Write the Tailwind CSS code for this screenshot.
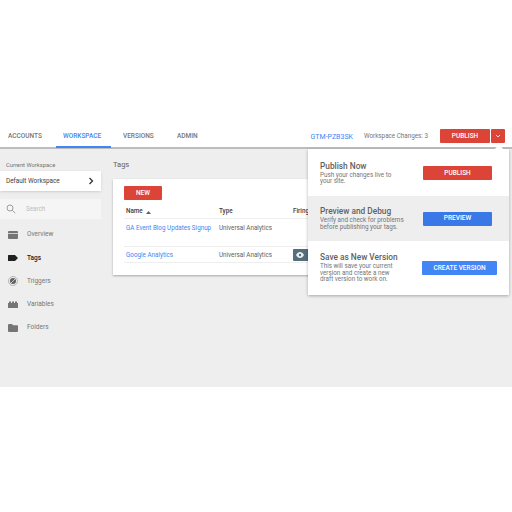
<!DOCTYPE html>
<html lang="en">
<head>
  <meta charset="UTF-8" />
  <title>Tag Manager</title>
  <script src="https://cdn.jsdelivr.net/npm/@tailwindcss/browser@4"></script>
</head>
<body class="bg-white h-[512px] overflow-hidden font-['Roboto',sans-serif] text-[#616161]">
  <div class="pt-[125px] relative">
    <!-- top bar -->
    <header class="h-[24px] bg-white border-b-2 border-[#bdbdbd] flex items-center pl-2 pr-[7px] text-[6.5px] font-medium">
      <div class="w-[48px] pt-[2px] text-[#757575]">ACCOUNTS</div>
      <div class="w-[55px] text-[#4285f4] pl-[7px] pt-[1px] h-[22px] mt-[2px] flex items-center border-b-2 border-[#4285f4]">WORKSPACE</div>
      <div class="w-[66px] pt-[2px] text-[#757575] pl-[12px]">VERSIONS</div>
      <div class="pt-[2px] text-[#757575]">ADMIN</div>
      <div class="ml-auto pt-[2px] text-[#4285f4] font-normal text-[7px]">GTM-PZB3SK</div>
      <div class="ml-[11px] pt-[2px] font-normal text-[6.3px] text-[#757575]">Workspace Changes: 3</div>
      <button class="ml-[12px] pt-[1px] w-[50px] h-[14px] bg-[#db4437] text-white rounded-[1px]">PUBLISH</button>
      <button class="ml-[1px] w-[14px] h-[14px] bg-[#db4437] rounded-[1px] flex items-center justify-center">
        <svg width="6" height="4" viewBox="0 0 6 4" fill="none" stroke="#fff" stroke-width="0.8"><path d="M1 1l2 2 2-2"/></svg>
      </button>
    </header>

    <main class="h-[238px] bg-[#eeeeee] flex">
      <!-- sidebar -->
      <aside class="w-[101px] shrink-0">
        <div class="pt-[12px] pl-[6px] text-[5.800px] leading-[8px] text-[#757575]">Current Workspace</div>
        <div class="mt-[2px] h-[20px] bg-white shadow-sm flex items-center justify-between pl-[6px] pr-[7px] text-[6.400px] text-[#424242]">
          <span class="pt-[2px]">Default Workspace</span>
          <svg width="6" height="8" viewBox="0 0 6 8" fill="none" stroke="#333" stroke-width="1.3"><path d="M1.500 1l3 3-3 3"/></svg>
        </div>
        <div class="mt-[8px] h-[20px] bg-[#f5f5f5] flex items-center pl-[6px] text-[6.300px] text-[#bdbdbd]">
          <svg width="10" height="10" viewBox="0 0 10 10" fill="none" stroke="#9e9e9e" stroke-width="1"><circle cx="4" cy="4" r="3"/><path d="M6.200 6.200l3 3"/></svg>
          <span class="ml-[10px] pt-[2px]">Search</span>
        </div>
        <nav class="mt-[4px] text-[6.500px]">
          <div class="h-[23.25px] flex items-center pl-[8px] text-[#757575]">
            <svg class="w-[10px]" width="10" height="8" viewBox="0 0 10 8"><path d="M1 0h8a1 1 0 0 1 1 1v1H0V1a1 1 0 0 1 1-1zM0 2.800h10V7a1 1 0 0 1-1 1H1a1 1 0 0 1-1-1z" fill="#757575"/></svg>
            <span class="ml-[9px] pt-[1px]">Overview</span>
          </div>
          <div class="h-[23.25px] flex items-center pl-[8px] text-[#212121] font-medium">
            <svg class="w-[10px]" width="10" height="6" viewBox="0 0 10 6"><path d="M0 .5A.5.5 0 0 1 .5 0H7l3 3-3 3H.5A.5.5 0 0 1 0 5.500z" fill="#212121"/></svg>
            <span class="ml-[9px] pt-[1px]">Tags</span>
          </div>
          <div class="h-[23.25px] flex items-center pl-[8px] text-[#757575]">
            <svg class="w-[10px]" width="10" height="10" viewBox="0 0 10 10"><circle cx="5" cy="5" r="4.500" fill="none" stroke="#9e9e9e" stroke-width=".7"/><circle cx="5" cy="5" r="3" fill="#616161"/><path d="M3 7l4-4" stroke="#eee" stroke-width=".7"/></svg>
            <span class="ml-[9px] pt-[1px]">Triggers</span>
          </div>
          <div class="h-[23.25px] flex items-center pl-[8px] text-[#757575]">
            <svg class="w-[10px]" width="10" height="7" viewBox="0 0 10 7"><path d="M0 2h1V.5h2V2h1V.5h2V2h1V.5h2V2h1v5H0z" fill="#757575"/></svg>
            <span class="ml-[9px] pt-[1px]">Variables</span>
          </div>
          <div class="h-[23.25px] flex items-center pl-[8px] text-[#757575]">
            <svg class="w-[10px]" width="10" height="8" viewBox="0 0 10 8"><path d="M0 1a1 1 0 0 1 1-1h3l1 1.200h4a1 1 0 0 1 1 1V7a1 1 0 0 1-1 1H1a1 1 0 0 1-1-1z" fill="#757575"/></svg>
            <span class="ml-[9px] pt-[1px]">Folders</span>
          </div>
        </nav>
      </aside>

      <!-- content -->
      <section class="flex-1 pl-[12px] pr-[10px]">
        <h2 class="pt-[11px] text-[7.500px] leading-[10px] text-[#616161]">Tags</h2>
        <div class="mt-[9px] h-[96px] bg-white shadow-[0_1px_2px_rgba(0,0,0,0.3)] pt-[7px] pl-[11px]">
          <button class="block pt-[1px] w-[38px] h-[14px] bg-[#db4437] text-white text-[6.5px] font-medium rounded-[1px]">NEW</button>
          <div class="mt-[4px] pt-[2px] flex h-[15px] items-center border-b border-[#eeeeee] pl-[2px] text-[6.300px] font-medium text-[#424242]">
            <div class="w-[93px] flex items-center gap-[3px]">Name <svg width="5" height="3" viewBox="0 0 5 3"><path d="M0 3l2.500-3L5 3z" fill="#616161"/></svg></div>
            <div class="w-[74px]">Type</div>
            <div>Firing</div>
          </div>
          <div class="flex h-[28px] pt-[2px] border-b border-[#eeeeee] pl-[2px] text-[6.300px] leading-[14px]">
            <div class="w-[93px] text-[#4285f4] whitespace-nowrap">GA Event Blog Updates Signup</div>
            <div class="w-[74px]">Universal Analytics</div>
          </div>
          <div class="flex h-[16px] items-center border-b border-[#eeeeee] pl-[2px] text-[6.300px]">
            <div class="w-[93px] pt-[2px] text-[#4285f4]">Google Analytics</div>
            <div class="w-[74px] pt-[2px]">Universal Analytics</div>
            <div class="w-[40px] h-[12px] bg-[#546e7a] rounded-[1px] flex items-center pl-[3px]">
              <svg width="8" height="6" viewBox="0 0 8 6"><path d="M0 3c1-2 2.500-3 4-3s3 1 4 3c-1 2-2.500 3-4 3S1 5 0 3z" fill="#eceff1"/><circle cx="4" cy="3" r="1.200" fill="#546e7a"/></svg>
            </div>
          </div>
        </div>
      </section>
    </main>

    <!-- publish popover -->
    <div class="absolute left-[308px] top-[149px] w-[201px] bg-white shadow-[0_1px_3px_rgba(0,0,0,0.3)]">
      <div class="absolute -top-[3px] right-[7px] w-[6px] h-[6px] bg-white rotate-45"></div>
      <div class="h-[47px] flex items-center justify-between pl-[12px] pr-[17px] pt-[1px]">
        <div class="w-[80px] text-[6.300px] leading-[6.500px] text-[#757575]">
          <div class="text-[8.300px] leading-[9px] mb-[1px] font-medium text-[#616161]">Publish Now</div>
          Push your changes live to your site.
        </div>
        <button class="pt-[1px] w-[69px] h-[14px] bg-[#db4437] text-white text-[6.500px] font-medium rounded-[1px]">PUBLISH</button>
      </div>
      <div class="h-[45px] bg-[#eeeeee] flex items-center justify-between pl-[12px] pr-[17px]">
        <div class="w-[88px] text-[6.300px] leading-[6.500px] text-[#757575]">
          <div class="text-[8.300px] leading-[9px] mb-[1px] font-medium text-[#616161]">Preview and Debug</div>
          Verify and check for problems before publishing your tags.
        </div>
        <button class="pt-[1px] w-[69px] h-[14px] bg-[#3b78e7] text-white text-[6.500px] font-medium rounded-[1px]">PREVIEW</button>
      </div>
      <div class="h-[54px] flex items-center justify-between pl-[12px] pr-[12px]">
        <div class="w-[80px] text-[6.300px] leading-[6.500px] text-[#757575]">
          <div class="text-[8.300px] leading-[9px] mb-[1px] whitespace-nowrap font-medium text-[#616161]">Save as New Version</div>
          This will save your current version and create a new draft version to work on.
        </div>
        <button class="pt-[1px] w-[75px] h-[14px] bg-[#4285f4] text-white text-[6.500px] font-medium rounded-[1px]">CREATE VERSION</button>
      </div>
    </div>
  </div>
</body>
</html>
